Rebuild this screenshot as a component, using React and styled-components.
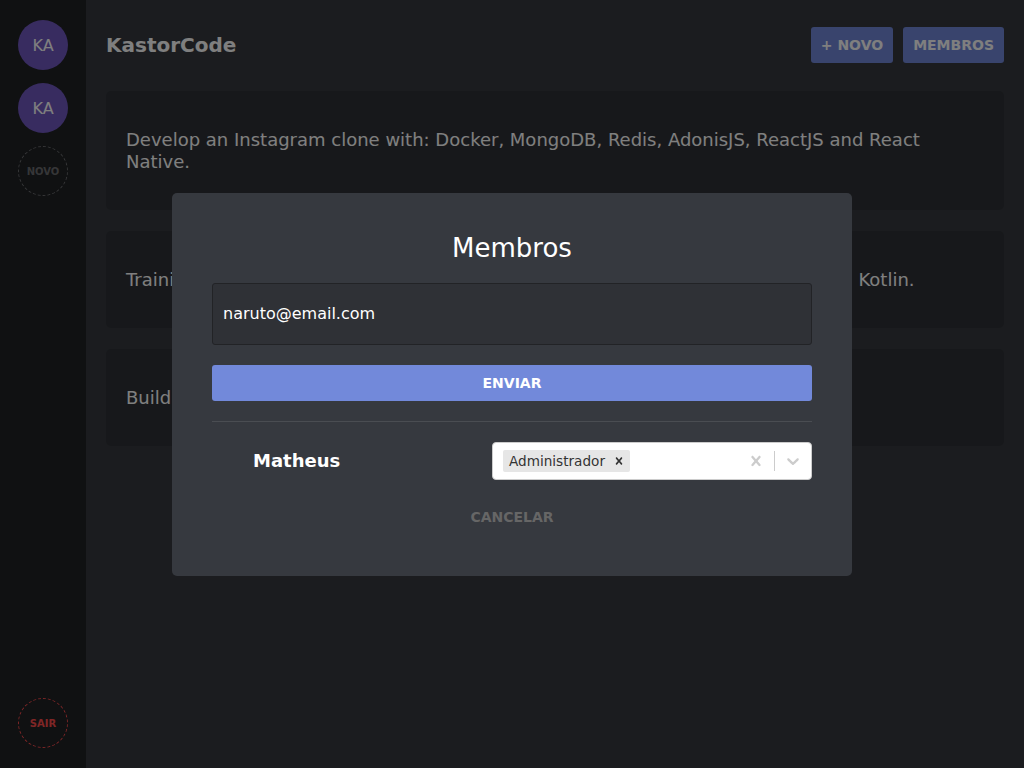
import React from "react";
import styled, { createGlobalStyle } from "styled-components";

const GlobalStyle = createGlobalStyle`
  * { box-sizing: border-box; margin: 0; padding: 0; }
  html, body, #root { height: 100%; }
  body {
    background: #36393f;
    font-family: "DejaVu Sans", Verdana, sans-serif;
    color: #fff;
  }
`;

const teams = ["KA", "KA"];
const projects = [
  "Develop an Instagram clone with: Docker, MongoDB, Redis, AdonisJS, ReactJS and React Native.",
  "Training app for Android built from scratch with Java, Jetpack, Room, Retrofit and Kotlin.",
  "Build a REST API with Node.js, Express and PostgreSQL.",
];

const crossPath =
  "M14.348 14.849c-0.469 0.469-1.229 0.469-1.697 0l-2.651-3.030-2.651 3.029c-0.469 0.469-1.229 0.469-1.697 0-0.469-0.469-0.469-1.229 0-1.697l2.758-3.15-2.759-3.152c-0.469-0.469-0.469-1.228 0-1.697s1.228-0.469 1.697 0l2.652 3.031 2.651-3.031c0.469-0.469 1.228-0.469 1.697 0s0.469 1.229 0 1.697l-2.758 3.152 2.758 3.15c0.469 0.469 0.469 1.229 0 1.698z";

function App() {
  return (
    <>
      <GlobalStyle />
      <Container>
        <Sidebar>
          <TeamList>
            {teams.map((t, i) => (
              <Avatar key={i}>{t}</Avatar>
            ))}
            <DashedButton>NOVO</DashedButton>
          </TeamList>
          <DashedButton danger>SAIR</DashedButton>
        </Sidebar>
        <Main>
          <Header>
            <Title>KastorCode</Title>
            <Actions>
              <Button>+ NOVO</Button>
              <Button>MEMBROS</Button>
            </Actions>
          </Header>
          {projects.map((p, i) => (
            <Card key={i}>
              <p>{p}</p>
            </Card>
          ))}
        </Main>
      </Container>

      <Overlay>
        <Modal>
          <ModalTitle>Membros</ModalTitle>
          <Form>
            <Input defaultValue="naruto@email.com" />
            <Submit type="button">ENVIAR</Submit>
          </Form>
          <MemberList>
            <Member>
              <strong>Matheus</strong>
              <Select>
                <ValueArea>
                  <Chip>
                    <ChipLabel>Administrador</ChipLabel>
                    <ChipRemove>
                      <svg width="14" height="14" viewBox="0 0 20 20" fill="#333">
                        <path d={crossPath} />
                      </svg>
                    </ChipRemove>
                  </Chip>
                </ValueArea>
                <Indicators>
                  <Indicator>
                    <svg width="20" height="20" viewBox="0 0 20 20" fill="#ccc">
                      <path d={crossPath} />
                    </svg>
                  </Indicator>
                  <Separator />
                  <Indicator>
                    <svg width="20" height="20" viewBox="0 0 20 20" fill="#ccc">
                      <path d="M4.516 7.548c0.436-0.446 1.043-0.481 1.576 0l3.908 3.747 3.908-3.747c0.533-0.481 1.141-0.446 1.574 0 0.436 0.445 0.408 1.197 0 1.615-0.406 0.418-4.695 4.502-4.695 4.502-0.217 0.223-0.502 0.335-0.787 0.335s-0.57-0.112-0.789-0.335c0 0-4.287-4.084-4.695-4.502s-0.436-1.170 0-1.615z" />
                    </svg>
                  </Indicator>
                </Indicators>
              </Select>
            </Member>
          </MemberList>
          <Cancel type="button">CANCELAR</Cancel>
        </Modal>
      </Overlay>
    </>
  );
}

const Container = styled.div`
  display: flex;
  height: 100%;
`;

const Sidebar = styled.aside`
  width: 86px;
  flex-shrink: 0;
  background: #202225;
  padding: 20px 0;
  display: flex;
  flex-direction: column;
  align-items: center;
  justify-content: space-between;
`;

const TeamList = styled.div`
  display: flex;
  flex-direction: column;
  gap: 13px;
`;

const Avatar = styled.button`
  width: 50px;
  height: 50px;
  border-radius: 50%;
  border: 0;
  background: #7159c1;
  color: #fff;
  font-family: inherit;
  font-size: 16px;
  display: flex;
  align-items: center;
  justify-content: center;
`;

const DashedButton = styled.button`
  width: 50px;
  height: 50px;
  border-radius: 50%;
  background: transparent;
  border: 1px dashed ${(p) => (p.danger ? "#ff4d4d" : "rgba(255,255,255,0.35)")};
  color: ${(p) => (p.danger ? "#ff4d4d" : "rgba(255,255,255,0.35)")};
  font-family: inherit;
  font-size: 10px;
  font-weight: bold;
`;

const Main = styled.main`
  flex: 1;
  padding: 20px;
`;

const Header = styled.header`
  height: 50px;
  display: flex;
  align-items: center;
  justify-content: space-between;
  margin-bottom: 21px;
`;

const Title = styled.h1`
  font-size: 20px;
  font-weight: bold;
`;

const Actions = styled.div`
  display: flex;
  gap: 10px;
`;

const Button = styled.button`
  height: 36px;
  padding: 0 10px;
  border: 0;
  border-radius: 3px;
  background: #7289da;
  color: #fff;
  font-family: inherit;
  font-size: 14px;
  font-weight: bold;
`;

const Card = styled.div`
  background: #2f3136;
  border-radius: 5px;
  padding: 38px 20px 37px;
  margin-bottom: 21px;

  p {
    font-size: 18px;
    line-height: 22px;
    color: #fff;
  }
`;

const Overlay = styled.div`
  position: fixed;
  inset: 0;
  background: rgba(0, 0, 0, 0.5);
  display: flex;
  align-items: center;
  justify-content: center;
`;

const Modal = styled.div`
  width: 680px;
  background: #36393f;
  border-radius: 5px;
  padding: 40px;
  display: flex;
  flex-direction: column;
`;

const ModalTitle = styled.h1`
  font-size: 26px;
  font-weight: normal;
  text-align: center;
  line-height: 30px;
`;

const Form = styled.div`
  display: flex;
  flex-direction: column;
  margin-top: 20px;
`;

const Input = styled.input`
  height: 62px;
  background: #2f3136;
  border: 1px solid #222326;
  border-radius: 3px;
  padding: 0 10px;
  color: #fff;
  font-family: inherit;
  font-size: 16px;
  outline: none;
`;

const Submit = styled.button`
  margin-top: 20px;
  height: 36px;
  border: 0;
  border-radius: 3px;
  background: #7289da;
  color: #fff;
  font-family: inherit;
  font-size: 14px;
  font-weight: bold;
`;

const MemberList = styled.ul`
  list-style: none;
  margin-top: 20px;
  border-top: 1px solid rgba(255, 255, 255, 0.1);
  padding-top: 20px;
`;

const Member = styled.li`
  display: flex;
  align-items: center;
  justify-content: space-between;
  padding-left: 41px;

  strong {
    font-size: 18px;
    color: #fff;
  }
`;

const Select = styled.div`
  width: 320px;
  height: 38px;
  background: #fff;
  border: 1px solid #ccc;
  border-radius: 4px;
  display: flex;
  align-items: center;
`;

const ValueArea = styled.div`
  flex: 1;
  padding: 2px 8px;
  display: flex;
`;

const Chip = styled.div`
  display: flex;
  align-items: center;
  background: #e6e6e6;
  border-radius: 2px;
  margin: 2px;
`;

const ChipLabel = styled.span`
  color: #333;
  font-size: 13.6px;
  padding: 3px 3px 3px 6px;
`;

const ChipRemove = styled.span`
  display: flex;
  align-items: center;
  padding: 0 4px;
`;

const Indicators = styled.div`
  display: flex;
  align-items: center;
  align-self: stretch;
`;

const Indicator = styled.div`
  padding: 8px;
  display: flex;
  align-items: center;
`;

const Separator = styled.span`
  width: 1px;
  align-self: stretch;
  margin: 8px 0;
  background: #ccc;
`;

const Cancel = styled.button`
  margin-top: 18px;
  height: 38px;
  align-self: center;
  background: transparent;
  border: 0;
  color: #666;
  font-family: inherit;
  font-size: 14px;
  font-weight: bold;
`;

export default App;
